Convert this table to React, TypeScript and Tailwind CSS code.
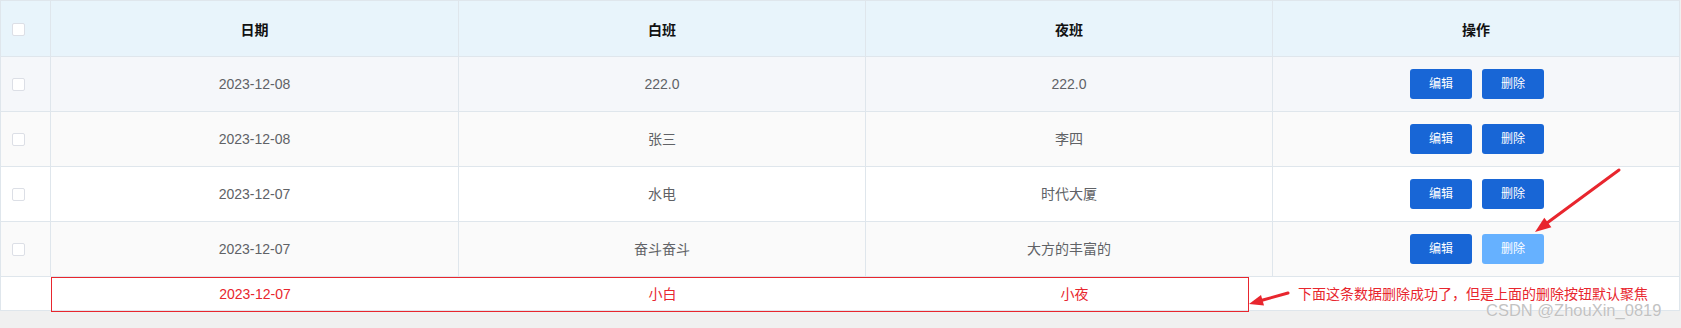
import React from "react";

const font = "font-['Liberation_Sans','Noto_Sans_CJK_SC',sans-serif]";

type Row = { date: string; day: string; night: string; bg: string; focusDelete?: boolean };

const rows: Row[] = [
  { date: "2023-12-08", day: "222.0", night: "222.0", bg: "bg-[#f5f7fa]" },
  { date: "2023-12-08", day: "张三", night: "李四", bg: "bg-[#fafafa]" },
  { date: "2023-12-07", day: "水电", night: "时代大厦", bg: "bg-white" },
  { date: "2023-12-07", day: "奋斗奋斗", night: "大方的丰富的", bg: "bg-[#fafafa]", focusDelete: true },
];

function Checkbox() {
  return <span className="block w-[13px] h-[13px] bg-white border border-[#dcdfe6] rounded-[2px]" />;
}

const gridCols = "grid grid-cols-[50px_408px_407px_407px_1fr]";

export default function App() {
  return (
    <div className={`relative w-[1681px] h-[328px] bg-[#f0f0f0] ${font}`}>
      <div className="w-[1680px] bg-white border-t border-l border-r border-[#dfe6ec]">
        {/* header */}
        <div className={`${gridCols} h-[56px] bg-[#e8f4fb] border-b border-[#dfe6ec] text-[14px] font-bold text-[#111]`}>
          <div className="flex items-center pl-[11px] pt-[2px] border-r border-[#dfe6ec]">
            <Checkbox />
          </div>
          <div className="flex items-center justify-center pt-[3px] border-r border-[#dfe6ec]">日期</div>
          <div className="flex items-center justify-center pt-[3px] border-r border-[#dfe6ec]">白班</div>
          <div className="flex items-center justify-center pt-[3px] border-r border-[#dfe6ec]">夜班</div>
          <div className="flex items-center justify-center pt-[3px]">操作</div>
        </div>
        {rows.map((r, i) => (
          <div key={i} className={`${gridCols} h-[55px] ${r.bg} border-b border-[#dfe6ec] text-[14px] text-[#606266]`}>
            <div className="flex items-center pl-[11px] border-r border-[#dfe6ec]">
              <Checkbox />
            </div>
            <div className="flex items-center justify-center border-r border-[#dfe6ec]">{r.date}</div>
            <div className="flex items-center justify-center border-r border-[#dfe6ec]">{r.day}</div>
            <div className="flex items-center justify-center border-r border-[#dfe6ec]">{r.night}</div>
            <div className="flex items-center justify-center gap-[10px] pl-[2px]">
              <button className="w-[62px] h-[30px] rounded-[3px] bg-[#1866d6] text-white text-[12px]">编辑</button>
              <button
                className={`w-[62px] h-[30px] rounded-[3px] text-white text-[12px] ${
                  r.focusDelete ? "bg-[#66b1ff]" : "bg-[#1866d6]"
                }`}
              >
                删除
              </button>
            </div>
          </div>
        ))}
        {/* deleted row still showing */}
        <div className={`${gridCols} h-[34px] bg-white border-b border-[#dfe6ec] text-[14px] text-[#e8262e]`}>
          <div />
          <div className="flex items-center justify-center pt-[1px]">2023-12-07</div>
          <div className="flex items-center justify-center pt-[1px]">小白</div>
          <div className="flex items-center justify-center pt-[1px] pl-[10px]">小夜</div>
          <div />
        </div>
      </div>

      {/* annotation overlays */}
      <div className="absolute left-[51px] top-[277px] w-[1198px] h-[35px] border border-[#e8262e] pointer-events-none" />
      <svg className="absolute left-0 top-0 pointer-events-none" width="1681" height="328">
        <line x1="1619" y1="170" x2="1547" y2="223" stroke="#e8262e" strokeWidth="3" strokeLinecap="round" />
        <polygon points="1535,232 1551.4,227.3 1544.3,217.7" fill="#e8262e" />
        <line x1="1288" y1="293" x2="1262" y2="300.3" stroke="#e8262e" strokeWidth="3" strokeLinecap="round" />
        <polygon points="1249,304 1264,305.5 1261,294.9" fill="#e8262e" />
      </svg>
      <div className="absolute left-[1298px] top-[286px] text-[14px] leading-[16px] text-[#e8262e] whitespace-nowrap">
        下面这条数据删除成功了，但是上面的删除按钮默认聚焦
      </div>
      <div className="absolute left-[1486px] top-[301px] text-[16.5px] leading-[18px] text-[#c2c2c2] whitespace-nowrap [text-shadow:0_0_1px_#ffffff]">
        CSDN @ZhouXin_0819
      </div>
    </div>
  );
}
